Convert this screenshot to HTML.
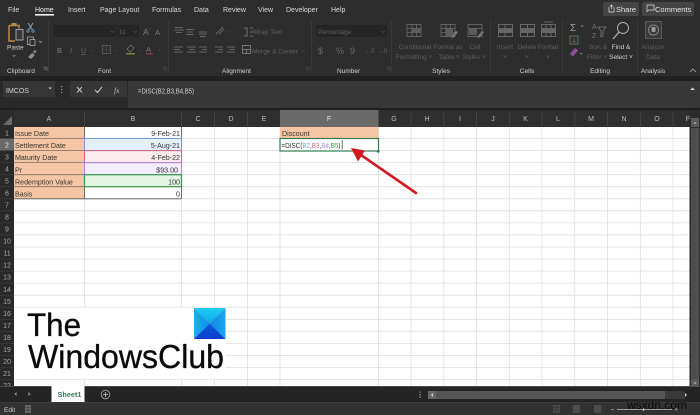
<!DOCTYPE html>
<html><head><meta charset="utf-8"><style>
html,body{margin:0;padding:0;background:#2d2d2d;width:700px;height:415px;overflow:hidden}
svg{display:block;filter:blur(.3px)}
text{font-family:"Liberation Sans",sans-serif}
.t{font-size:7px;fill:#d8d8d8}
.d{font-size:6.5px;fill:#5e5e5e}
.g{font-size:6.5px;fill:#d0d0d0}
.h{font-size:7px;fill:#bdbdbd;text-anchor:middle}
.r{font-size:7px;fill:#a8a8a8;text-anchor:middle}
.c{font-size:7.1px;fill:#333}
.m{text-anchor:middle}
.e{text-anchor:end}
</style></head><body>
<svg width="700" height="415" viewBox="0 0 700 415" xmlns="http://www.w3.org/2000/svg">
<defs>
<linearGradient id="l1" x1="0" y1="0" x2="0" y2="1"><stop offset="0" stop-color="#1ecbf2"/><stop offset="1" stop-color="#12a8ee"/></linearGradient>
<linearGradient id="l2" x1="0" y1="0" x2="1" y2="0"><stop offset="0" stop-color="#16b4f0"/><stop offset="1" stop-color="#0f8ae4"/></linearGradient>
<linearGradient id="l3" x1="1" y1="0" x2="0" y2="0"><stop offset="0" stop-color="#1aa8ef"/><stop offset="1" stop-color="#0f86e2"/></linearGradient>
<linearGradient id="l4" x1="0" y1="1" x2="0" y2="0"><stop offset="0" stop-color="#0a3fd0"/><stop offset="1" stop-color="#0b58d8"/></linearGradient>
</defs>

<!-- chrome backgrounds -->
<rect width="700" height="76" fill="#2d2d2d"/>
<rect y="76" width="700" height="5" fill="#202020"/>
<rect y="81" width="700" height="29" fill="#292929"/>
<rect x="128" y="81" width="572" height="27" fill="#373737"/>
<rect x="3" y="81" width="52" height="16" fill="#363636"/>
<rect x="70" y="81" width="57" height="16" fill="#363636"/>
<rect y="108" width="700" height="3" fill="#1f1f1f"/>

<!-- tabs -->
<text class="t" x="8" y="12">File</text>
<text class="t" x="35" y="12" style="fill:#f2f2f2">Home</text>
<rect x="35" y="14" width="19" height="1.6" fill="#f2f2f2"/>
<text class="t" x="68" y="12">Insert</text>
<text class="t" x="100" y="12">Page Layout</text>
<text class="t" x="152" y="12">Formulas</text>
<text class="t" x="194" y="12">Data</text>
<text class="t" x="223" y="12">Review</text>
<text class="t" x="258" y="12">View</text>
<text class="t" x="286" y="12">Developer</text>
<text class="t" x="331" y="12">Help</text>

<rect x="603" y="2" width="36" height="14" rx="1.5" fill="#444"/>
<path d="M609 7v5h5V7M611.500 9V5M610 6.500l1.500-1.500 1.500 1.500" fill="none" stroke="#ddd" stroke-width=".7"/>
<text x="616" y="12" style="font-size:7.500px;fill:#e4e4e4">Share</text>
<rect x="642" y="2" width="52" height="14" rx="1.500" fill="#444"/>
<path d="M647 5h7v5h-5l-2 1.500z" fill="none" stroke="#ddd" stroke-width=".7"/>
<text x="655" y="12" style="font-size:7.500px;fill:#e4e4e4">Comments</text>

<!-- clipboard group -->
<path d="M9 25.500h10v3M9 25.500v15.500h6" fill="none" stroke="#c08a45" stroke-width="1.500"/>
<rect x="11.500" y="23" width="5" height="3" fill="#b4874c"/>
<rect x="16" y="29.500" width="7" height="10.500" fill="#3a3a3a" stroke="#bdbdbd" stroke-width=".8"/>
<text class="g" x="7" y="49.500">Paste</text>
<path d="M12.500 55l1.500 1.500 1.500-1.500" fill="none" stroke="#aaa" stroke-width=".6"/>
<path d="M28 23l4.500 7M33 23l-4.500 7" stroke="#7fa8c8" stroke-width="1"/>
<circle cx="28" cy="31" r="1.200" fill="none" stroke="#7fa8c8" stroke-width=".7"/><circle cx="33" cy="31" r="1.200" fill="none" stroke="#7fa8c8" stroke-width=".7"/>
<rect x="27.500" y="37" width="6" height="7.500" fill="none" stroke="#bbb" stroke-width=".7"/>
<rect x="30" y="39.500" width="5" height="6" fill="#2d2d2d" stroke="#bbb" stroke-width=".7"/>
<path d="M39 41l1.500 1.500 1.500-1.500" fill="none" stroke="#bbb" stroke-width=".6"/>
<path d="M28 57l4-4 3 2-4 4zM33 52l2-2 1.500 1.500-2 2" fill="#8c8c8c"/>
<text class="g" x="7" y="73">Clipboard</text>
<path d="M43 67h4v4M46 70l-2-2" fill="none" stroke="#888" stroke-width=".6"/>
<rect x="48" y="20" width=".8" height="53" fill="#3c3c3c"/>

<!-- font group -->
<rect x="54" y="25" width="62" height="12" fill="#252525"/>
<rect x="117" y="25" width="22" height="12" fill="#252525"/>
<text class="d" x="119" y="34">11</text>
<path d="M111 31l1.500 1.500 1.500-1.500M134 31l1.500 1.500 1.500-1.500" fill="none" stroke="#555" stroke-width=".6"/>
<text x="143" y="35" style="font-size:8.500px;fill:#777">A</text><text x="149" y="30" style="font-size:4px;fill:#777">^</text>
<text x="155" y="35" style="font-size:7.500px;fill:#777">A</text><text x="161" y="30" style="font-size:4px;fill:#777">ˇ</text>
<text x="57" y="53" style="font-size:7px;font-weight:bold;fill:#6a6a6a">B</text>
<text x="70" y="53" style="font-size:7px;font-style:italic;fill:#6a6a6a">I</text>
<text x="81" y="53" style="font-size:7px;fill:#6a6a6a;text-decoration:underline">U</text>
<rect x="102.500" y="45.500" width="8" height="8" fill="none" stroke="#666" stroke-width=".7"/><path d="M106.500 45.500v8M102.500 49.500h8" stroke="#555" stroke-width=".5"/>
<path d="M127 49l4-4 3 3-4 4z" fill="none" stroke="#777" stroke-width=".7"/><rect x="126" y="53" width="9" height="1.500" fill="#8a7a33"/>
<text x="146" y="52" style="font-size:7.500px;fill:#777">A</text><rect x="146" y="53" width="7" height="1.500" fill="#8a3a3a"/>
<path d="M92 50l1 1 1-1M115 50l1 1 1-1M139 50l1 1 1-1M158 50l1 1 1-1" fill="none" stroke="#555" stroke-width=".5"/>
<text class="g" x="98" y="73">Font</text>
<path d="M162 67h4v4M165 70l-2-2" fill="none" stroke="#555" stroke-width=".6"/>
<rect x="168" y="20" width=".8" height="53" fill="#3c3c3c"/>

<!-- alignment group -->
<g stroke="#777" stroke-width=".8" fill="none">
<path d="M175 27.500h8M174 30h10M176 32.500h6M186 29.500h8M187 32h6M186 34.500h8M199 32h8M199 34h8M200 36.500h6"/>
<path d="M174 47h9M174 49.500h6M174 52h9M187 47h9M189 49.500h5M187 52h9M199 47h8M202 49.500h5M199 52h8"/>
<path d="M215 47h8M218 49.500h5M215 52h8M227 47h8M230 49.500h5M227 52h8"/>
<path d="M216 34l7-7M219 34l5-5"/>
<path d="M244 28h3v8h-3M250 28h3M250 32h3M250 36h3" stroke="#888"/>
<rect x="242.500" y="45.500" width="8" height="8" stroke="#888"/><path d="M242.500 49.500h8M246.500 49.500v4" stroke="#888"/>
</g>
<path d="M226 31l1 1 1-1M302 50l1.500 1.500 1.500-1.500" fill="none" stroke="#555" stroke-width=".5"/>
<text class="d" x="253" y="34">Wrap Text</text>
<text class="d" x="252" y="53.500">Merge &amp; Center</text>
<text class="g" x="222" y="73">Alignment</text>
<path d="M305 67h4v4M308 70l-2-2" fill="none" stroke="#555" stroke-width=".6"/>
<rect x="311" y="20" width=".8" height="53" fill="#3c3c3c"/>

<!-- number group -->
<rect x="316" y="25" width="71" height="12" fill="#252525"/>
<text class="d" x="318" y="34">Percentage</text>
<path d="M382 31l1.500 1.500 1.500-1.500" fill="none" stroke="#555" stroke-width=".6"/>
<text x="318" y="54" style="font-size:9px;fill:#6a6a6a">$</text>
<text x="336" y="54" style="font-size:9px;fill:#6a6a6a">%</text>
<text x="350" y="54" style="font-size:9px;fill:#6a6a6a">9</text>
<text x="365" y="53" style="font-size:6px;fill:#666">←0</text>
<text x="378" y="53" style="font-size:6px;fill:#666">→0</text>
<text class="g" x="337" y="73">Number</text>
<path d="M386 67h4v4M389 70l-2-2" fill="none" stroke="#555" stroke-width=".6"/>
<rect x="391" y="20" width=".8" height="53" fill="#3c3c3c"/>

<!-- styles group -->
<g fill="none" stroke="#6f6f6f" stroke-width=".8">
<rect x="407" y="24.500" width="14" height="12"/><path d="M407 28.500h14M407 32.500h14M412 24.500v12M416.500 24.500v12"/>
<rect x="441" y="24.500" width="14" height="12"/><path d="M441 28.500h14M441 32.500h14M446 24.500v12M450.500 24.500v12"/>
<rect x="468" y="24.500" width="14" height="12"/><path d="M468 28.500h14"/>
</g>
<rect x="412" y="28.500" width="9" height="4" fill="#5c5c5c"/>
<rect x="446" y="29" width="7" height="7" fill="#5c5c5c"/>
<path d="M451 37l5-6 2 1-5 6zM477 37l5-6 2 1-5 6z" fill="#7a7a7a"/>
<rect x="469" y="29" width="8" height="6" fill="#5c5c5c"/>
<text class="d m" x="415" y="49">Conditional</text>
<text class="d m" x="414" y="59">Formatting ˅</text>
<text class="d m" x="448" y="49">Format as</text>
<text class="d m" x="449" y="59">Table ˅</text>
<text class="d m" x="475" y="49">Cell</text>
<text class="d m" x="474" y="59">Styles ˅</text>
<text class="g m" x="441" y="73">Styles</text>
<rect x="490" y="20" width=".8" height="53" fill="#3c3c3c"/>

<!-- cells group -->
<g fill="none" stroke="#777" stroke-width=".8">
<rect x="498.500" y="24.500" width="14" height="12"/><path d="M498.500 28.500h14M498.500 32.500h14M505 24.500v12"/>
<rect x="520.500" y="24.500" width="14" height="12"/><path d="M520.500 28.500h14M520.500 32.500h14M527.500 24.500v12"/>
<rect x="541.500" y="24.500" width="14" height="12"/><path d="M541.500 28.500h14M541.500 32.500h14M546 24.500v12M551 24.500v12M544 22h9"/>
</g>
<rect x="498.500" y="28.500" width="14" height="4" fill="#666"/>
<rect x="520.500" y="28.500" width="14" height="4" fill="#666"/>
<rect x="541.500" y="28.500" width="14" height="4" fill="#666"/>
<text class="d m" x="505" y="49">Insert</text><text class="d m" x="505" y="59">˅</text>
<text class="d m" x="527" y="49">Delete</text><text class="d m" x="527" y="59">˅</text>
<text class="d m" x="548" y="49">Format</text><text class="d m" x="548" y="59">˅</text>
<text class="g m" x="527" y="73">Cells</text>
<rect x="562" y="20" width=".8" height="53" fill="#3c3c3c"/>

<!-- editing group -->
<text x="570" y="31" style="font-size:10px;fill:#a0a0a0">Σ</text>
<path d="M581 25.500l1.200 1.200 1.200-1.200" fill="none" stroke="#999" stroke-width=".6"/>
<rect x="570" y="36" width="8" height="8" fill="none" stroke="#5f8a6a" stroke-width=".8"/><path d="M574 37.500v5M572.500 41l1.500 1.500 1.500-1.500" fill="none" stroke="#777" stroke-width=".6"/>
<path d="M570 54l5-6 3 2.500-5 6z" fill="#8b4f9e"/>
<path d="M580 53l1.200 1.200 1.200-1.200" fill="none" stroke="#999" stroke-width=".6"/>
<text x="592" y="29" style="font-size:7px;fill:#777">A</text><text x="592" y="38" style="font-size:7px;fill:#777">Z</text>
<path d="M598 27h8l-3 4v5l-2 1v-6z" fill="none" stroke="#7a7a7a" stroke-width=".8"/>
<text class="d m" x="598" y="49">Sort &amp;</text>
<text class="d m" x="597" y="59">Filter ˅</text>
<circle cx="623" cy="28" r="5.500" fill="none" stroke="#b8b8b8" stroke-width=".9"/>
<path d="M619 32l-6 7" stroke="#b8b8b8" stroke-width="1.200"/>
<text class="g m" x="621" y="49">Find &amp;</text>
<text class="g m" x="621" y="59">Select ˅</text>
<text class="g m" x="600" y="73">Editing</text>
<rect x="637" y="20" width=".8" height="53" fill="#3c3c3c"/>

<!-- analysis -->
<rect x="645.500" y="21.500" width="16" height="17" fill="#3a3a3a" stroke="#666" stroke-width=".8"/>
<circle cx="653.500" cy="30" r="5" fill="none" stroke="#888" stroke-width=".9"/>
<rect x="651.500" y="27" width="4" height="5" rx="1" fill="#999"/>
<text class="d m" x="653" y="49">Analyze</text>
<text class="d m" x="653" y="59">Data</text>
<text class="g m" x="653" y="73">Analysis</text>
<path d="M690 72l3-3 3 3" fill="none" stroke="#aaa" stroke-width=".8"/>

<!-- formula bar -->
<text x="6" y="93" style="font-size:7px;fill:#cfcfcf">IMCOS</text>
<path d="M48.500 87.500l1.700 1.700 1.700-1.700z" fill="#ccc"/>
<g fill="#999"><rect x="61" y="86" width="1.200" height="1.200"/><rect x="61" y="89" width="1.200" height="1.200"/><rect x="61" y="92" width="1.200" height="1.200"/></g>
<path d="M77 87l5 5.500M82 87l-5 5.500" stroke="#c4c4c4" stroke-width="1"/>
<path d="M95 90l2.500 2.500 4.500-5.500" fill="none" stroke="#c4c4c4" stroke-width="1.100"/>
<text x="114" y="93" style="font-size:7.500px;font-style:italic;font-family:'Liberation Serif',serif;fill:#c4c4c4">fx</text>
<text x="138" y="93.500" style="font-size:7px;fill:#d4d4d4" textLength="56" lengthAdjust="spacingAndGlyphs">=DISC(B2,B3,B4,B5)</text>
<path d="M690 90l2.500-2.500 2.500 2.500z" fill="#ccc"/>

<!-- column headers -->
<rect y="110" width="690" height="17" fill="#2f2f2f"/>
<rect x="0" y="110" width="14" height="17" fill="#2a2a2a"/>
<path d="M12 116v9h-9z" fill="#6a6a6a"/>
<rect x="280" y="110" width="98.500" height="17" fill="#6a6a6a"/>
<g stroke="#474747" stroke-width=".8"><path d="M84.500 112v15M181.500 112v15M214.500 112v15M247.500 112v15M411 112v15M443.800 112v15M476.500 112v15M509.300 112v15M542 112v15M574.800 112v15M607.500 112v15M640.300 112v15M673 112v15"/></g>
<text class="h" x="49" y="121">A</text><text class="h" x="133" y="121">B</text><text class="h" x="198" y="121">C</text><text class="h" x="231" y="121">D</text><text class="h" x="264" y="121">E</text>
<text class="h" x="329" y="121" style="fill:#e0e0e0">F</text><text class="h" x="394" y="121">G</text><text class="h" x="427" y="121">H</text><text class="h" x="460" y="121">I</text><text class="h" x="493" y="121">J</text><text class="h" x="525.500" y="121">K</text><text class="h" x="558" y="121">L</text><text class="h" x="591" y="121">M</text><text class="h" x="624" y="121">N</text><text class="h" x="657" y="121">O</text><text class="h" x="688" y="121">P</text>

<!-- sheet -->
<rect x="14" y="127" width="675.500" height="259" fill="#fff"/>
<g stroke="#dedede" stroke-width=".8" fill="none">
<path d="M14 138.500h675.500M14 150.600h675.500M14 162.600h675.500M14 174.700h675.500M14 186.700h675.500M14 198.800h675.500M14 210.800h675.500M14 222.900h675.500M14 234.900h675.500M14 247h675.500M14 259h675.500M14 271.100h675.500M14 283.100h675.500M14 295.200h675.500M14 307.200h675.500M14 319.300h675.500M14 331.300h675.500M14 343.400h675.500M14 355.400h675.500M14 367.500h675.500M14 379.500h675.500"/>
<path d="M84.500 127v259M181.500 127v259M214.500 127v259M247.500 127v259M280 127v259M378.500 127v259M411 127v259M443.800 127v259M476.500 127v259M509.300 127v259M542 127v259M574.800 127v259M607.500 127v259M640.300 127v259M673 127v259"/>
</g>

<!-- row headers -->
<rect x="0" y="127" width="14" height="259" fill="#292929"/>
<rect x="0" y="138.500" width="14" height="12.100" fill="#6a6a6a"/>
<g stroke="#404040" stroke-width=".6"><path d="M0 138.500h14M0 150.600h14M0 162.600h14M0 174.700h14M0 186.700h14M0 198.800h14M0 210.800h14M0 222.900h14M0 234.900h14M0 247h14M0 259h14M0 271.100h14M0 283.100h14M0 295.200h14M0 307.200h14M0 319.300h14M0 331.300h14M0 343.400h14M0 355.400h14M0 367.500h14M0 379.500h14"/></g>
<text class="r" x="7" y="135.500">1</text><text class="r" x="7" y="147.500" style="fill:#e8e8e8">2</text><text class="r" x="7" y="159.500">3</text><text class="r" x="7" y="171.500">4</text><text class="r" x="7" y="183.500">5</text><text class="r" x="7" y="195.500">6</text><text class="r" x="7" y="207.500">7</text><text class="r" x="7" y="219.500">8</text><text class="r" x="7" y="231.500">9</text><text class="r" x="7" y="243.500">10</text><text class="r" x="7" y="255.600">11</text><text class="r" x="7" y="267.700">12</text><text class="r" x="7" y="279.700">13</text><text class="r" x="7" y="291.800">14</text><text class="r" x="7" y="303.800">15</text><text class="r" x="7" y="315.900">16</text><text class="r" x="7" y="327.900">17</text><text class="r" x="7" y="340">18</text><text class="r" x="7" y="352">19</text><text class="r" x="7" y="364.100">20</text><text class="r" x="7" y="376.100">21</text><text class="r" x="7" y="388">22</text>

<!-- data cells -->
<rect x="14" y="127" width="70.500" height="71.800" fill="#f6c6a4"/>
<g stroke="#7d6f66" stroke-width=".8"><path d="M14 138.500h70.500M14 150.600h70.500M14 162.600h70.500M14 174.700h70.500M14 186.700h70.500"/></g>
<rect x="84.500" y="138.500" width="97" height="12.100" fill="#e6f0fb"/>
<rect x="84.500" y="150.600" width="97" height="12" fill="#fdecef"/>
<rect x="84.500" y="162.600" width="97" height="12.100" fill="#f3ecfc"/>
<rect x="84.500" y="174.700" width="97" height="12" fill="#e3f5e4"/>
<g stroke="#555" stroke-width=".8" fill="none"><path d="M84.500 127v71.800M181.500 127v71.800M14 198.800h167.500"/><path d="M84.500 186.700h97M84.500 138.500h97" stroke="#b0b0b0"/></g>
<rect x="84.500" y="138.500" width="97" height="12.100" fill="none" stroke="#6f9fd8" stroke-width="1"/>
<rect x="84.500" y="150.600" width="97" height="12" fill="none" stroke="#d9667a" stroke-width="1"/>
<rect x="84.500" y="162.600" width="97" height="12.100" fill="none" stroke="#b08ae0" stroke-width="1"/>
<rect x="84.500" y="174.700" width="97" height="12" fill="none" stroke="#3a9a4a" stroke-width="1.200"/>
<text class="c" x="15" y="136">Issue Date</text>
<text class="c" x="15" y="148">Settlement Date</text>
<text class="c" x="15" y="160">Maturity Date</text>
<text class="c" x="15" y="172.300">Pr</text>
<text class="c" x="15" y="184.300">Redemption Value</text>
<text class="c" x="15" y="196.300">Basis</text>
<text class="c e" x="180" y="136">9-Feb-21</text>
<text class="c e" x="180" y="148">5-Aug-21</text>
<text class="c e" x="180" y="160">4-Feb-22</text>
<text class="c e" x="178" y="172.300">$93.00</text>
<text class="c e" x="180" y="184.300">100</text>
<text class="c e" x="180" y="196.300">0</text>

<rect x="280" y="127" width="98.500" height="11.500" fill="#f6c6a4"/>
<text class="c" x="282" y="136">Discount</text>
<rect x="280" y="138.500" width="98.500" height="12.500" fill="#fff" stroke="#2f7d4f" stroke-width="1.200"/>
<rect x="377" y="150" width="2.500" height="2.500" fill="#2f7d4f"/>
<text x="281.500" y="148" style="font-size:7px;fill:#333" textLength="59" lengthAdjust="spacingAndGlyphs">=DISC(<tspan fill="#6f9fd8">B2</tspan>,<tspan fill="#d9667a">B3</tspan>,<tspan fill="#b08ae0">B4</tspan>,<tspan fill="#3a9a4a">B5</tspan>)</text>
<rect x="341.800" y="140" width=".7" height="9.500" fill="#333"/>

<!-- arrow -->
<path d="M416 193L361 155" stroke="#d3191f" stroke-width="2.600" stroke-linecap="round"/>
<path d="M351 148l14 2.500-7 11z" fill="#d3191f"/>

<!-- logo -->
<rect x="14" y="307.700" width="212" height="71.400" fill="#fff"/>
<text x="27" y="336" style="font-size:32px;fill:#0b0b0b;stroke:#0b0b0b;stroke-width:.35px" textLength="54" lengthAdjust="spacingAndGlyphs">The</text>
<text x="28" y="368" style="font-size:33px;fill:#0b0b0b;stroke:#0b0b0b;stroke-width:.35px" textLength="196" lengthAdjust="spacingAndGlyphs">WindowsClub</text>
<path d="M194 308h31.500l-15.700 15.500z" fill="url(#l1)"/>
<path d="M194 308v31l15.800-15.500z" fill="url(#l2)"/>
<path d="M225.500 308v31l-15.700-15.500z" fill="url(#l3)"/>
<path d="M194 339h31.500l-15.700-15.500z" fill="url(#l4)"/>

<!-- right scrollbar -->
<rect x="689.500" y="110" width="10.500" height="281" fill="#2b2b2b"/>
<rect x="691" y="128" width="8" height="251" fill="#4d4d4d"/>
<rect x="691" y="118" width="8" height="9" fill="#5a5a5a"/>
<rect x="691" y="379" width="8" height="9" fill="#5a5a5a"/>
<path d="M693.500 123.500l1.500-1.500 1.500 1.500zM693.500 382.500l1.500 1.500 1.500-1.500z" fill="#ccc"/>

<!-- sheet tabs -->
<rect y="386" width="700" height="16" fill="#242424"/>
<rect y="386" width="700" height=".8" fill="#555"/>
<path d="M16.500 392l-2 2 2 2zM28.500 392l2 2-2 2z" fill="#999"/>
<rect x="51.500" y="386" width="33" height="16" fill="#fff"/>
<text x="57.500" y="397" style="font-size:7.300px;font-weight:bold;fill:#3c7a55">Sheet1</text>
<circle cx="105.500" cy="394.500" r="4.300" fill="none" stroke="#aaa" stroke-width=".8"/>
<path d="M103 394.500h5M105.500 392v5" stroke="#ccc" stroke-width=".8"/>
<g fill="#aaa"><rect x="419.500" y="391.500" width="1.200" height="1.200"/><rect x="419.500" y="394" width="1.200" height="1.200"/><rect x="419.500" y="396.500" width="1.200" height="1.200"/></g>
<rect x="428" y="391" width="257" height="8" fill="#555"/>
<rect x="428" y="391" width="8" height="8" fill="#666"/>
<rect x="665" y="391" width="20" height="8" fill="#3a3a3a"/>
<path d="M433 393l-2 2 2 2zM685 393l2 2-2 2z" fill="#ccc"/>

<!-- status bar -->
<rect y="402" width="700" height="13" fill="#323232"/>
<rect y="402" width="700" height=".7" fill="#3e3e3e"/>
<text x="4" y="412" style="font-size:6.500px;fill:#cfcfcf">Edit</text>
<rect x="25" y="405" width="6" height="8" fill="#6a6a6a"/>
<path d="M25 407.500h6M25 410h6M28 405v8" stroke="#333" stroke-width=".5"/>
<g fill="#4c4c4c"><rect x="553" y="405" width="7" height="8"/><rect x="573" y="405" width="7" height="8"/><rect x="594" y="405" width="7" height="8"/></g>
<path d="M553 407.500h7M553 410h7M555.500 405v8M558 405v8" stroke="#2e2e2e" stroke-width=".5"/>
<rect x="611" y="409" width="3" height=".8" fill="#999"/>
<rect x="617" y="409" width="55" height=".8" fill="#bbb"/>
<rect x="643" y="407" width="1" height="4" fill="#ccc"/>
<path d="M674 409h4M676 407v4" stroke="#999" stroke-width=".7"/>
<text x="627" y="409" style="font-size:12px;fill:#0a0a0a">wsxdn.com</text>
</svg>
</body></html>
